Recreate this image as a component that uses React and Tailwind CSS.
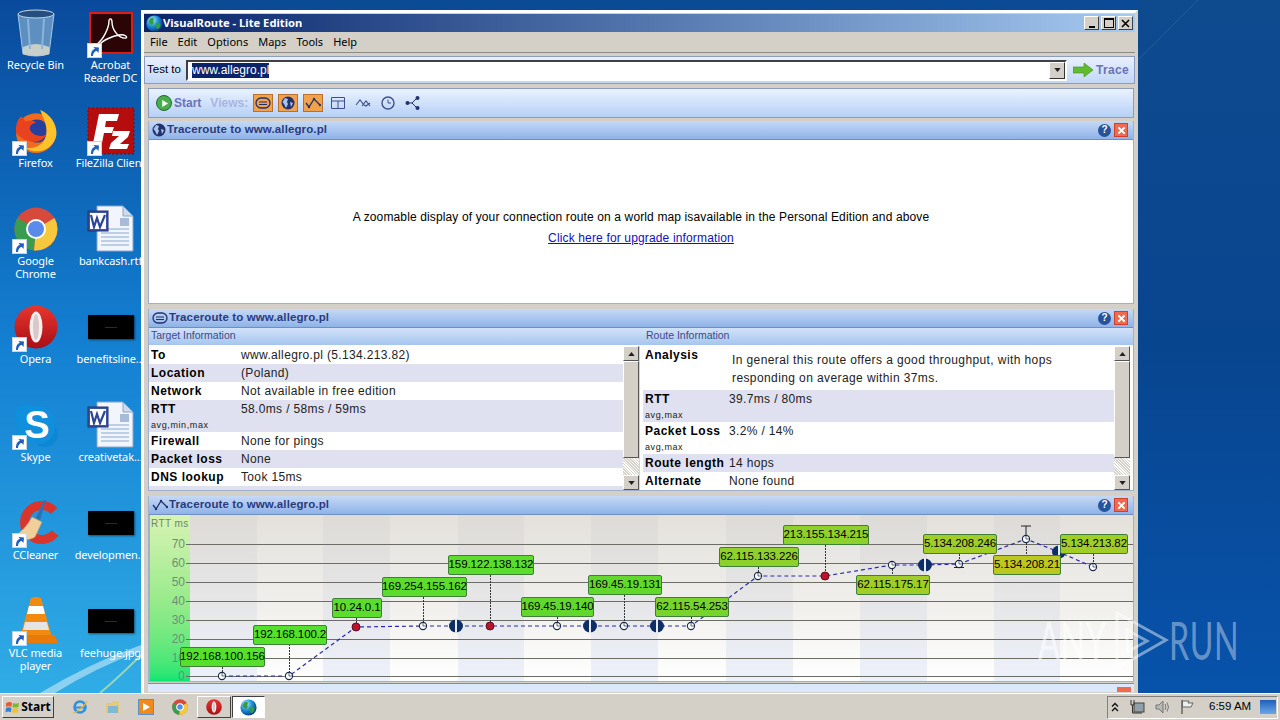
import { useId } from "react";

const sans = "font-['Liberation_Sans',Arial,sans-serif]";
const ui = "font-['Noto_Sans','Liberation_Sans',sans-serif]";

const Arrow = () => (
  <span className="absolute left-[0px] bottom-[0px] flex h-[15px] w-[15px] items-center justify-center border border-[#c8d4e4] bg-white">
    <svg viewBox="0 0 12 12" className="h-[12px] w-[12px]">
      <path d="M3 11 C3 6 5 4 7 4 L5.5 2 L11 2.5 L10.5 8 L8.8 6 C7 6 5 8 5 11 Z" fill="#1f5fc0" />
    </svg>
  </span>
);

const Globe = ({ size = 18 }) => {
  const id = useId();
  return (
    <svg viewBox="0 0 20 20" width={size} height={size} className="shrink-0">
      <defs>
        <radialGradient id={id} cx="35%" cy="30%" r="75%">
          <stop offset="0" stopColor="#bfeaff" />
          <stop offset="0.5" stopColor="#1d8fd8" />
          <stop offset="1" stopColor="#053a80" />
        </radialGradient>
      </defs>
      <circle cx="10" cy="10" r="9.5" fill={`url(#${id})`} />
      <path d="M5 4 C8 2 10 4 9 6 C8 8 10 9 8 11 C6 13 4 10 3 8 Z M12 9 C15 8 18 10 17 13 C16 16 13 18 12 15 Z" fill="#2fa03a" />
    </svg>
  );
};

const RecycleIcon = () => (
  <svg viewBox="0 0 40 48" className="h-[48px] w-[40px]">
    <path d="M2 5 L38 5 L33 45 Q20 49 7 45 Z" fill="#5d8fc0" stroke="#a8c8e0" />
    <ellipse cx="20" cy="5" rx="18" ry="4" fill="#264f80" stroke="#c4d8e8" />
    <path d="M7 38 Q20 32 33 38 L33 45 Q20 49 7 45 Z" fill="#c8cfc8" />
    <path d="M12 10 L14 40 M28 10 L26 40" stroke="#8ab4d8" strokeWidth="2" />
  </svg>
);

const AcrobatIcon = () => (
  <svg viewBox="0 0 44 42" className="h-[42px] w-[44px]">
    <rect x="1" y="1" width="42" height="40" fill="#2b0505" stroke="#e01b14" strokeWidth="2" />
    <path d="M8 32 C14 28 20 16 20 9 C20 6 23 6 23 10 C23 18 30 27 37 26 C39 25 36 22 30 23 C24 24 14 28 10 33" fill="none" stroke="#fff" strokeWidth="1.4" />
  </svg>
);

const FirefoxIcon = () => (
  <svg viewBox="0 0 44 44" className="h-[46px] w-[46px]">
    <circle cx="22" cy="24" r="19" fill="#f26a1f" />
    <circle cx="23" cy="22" r="11" fill="#27409c" />
    <path d="M26 2 C40 8 46 24 38 34 C32 42 20 44 12 38 C22 40 32 34 32 22 C32 14 28 8 26 2 Z" fill="#ffc22a" />
    <path d="M3 24 C2 16 5 10 8 8 L12 13 C16 11 20 12 22 14 C16 15 15 19 17 22 C20 27 28 28 32 25 C28 34 14 36 3 24 Z" fill="#e8421f" />
  </svg>
);

const FileZillaIcon = () => (
  <svg viewBox="0 0 48 48" className="h-[48px] w-[48px]">
    <rect x="1" y="1" width="46" height="46" fill="#b50d0d" strokeDasharray="2 2" stroke="#7a0a0a" />
    <path d="M12 7 L32 7 L30 14 L19 14 L18 20 L27 20 L25 26 L17 26 L14 41 L5 41 Z" fill="#fff" />
    <path d="M26 24 L43 24 L41 30 L33 37 L42 37 L40 42 L22 42 L24 36 L32 29 L25 29 Z" fill="#fff" />
  </svg>
);

const ChromeIcon = () => (
  <svg viewBox="0 0 44 44" className="h-[44px] w-[44px]">
    <circle cx="22" cy="22" r="21.5" fill="#d64a3c" />
    <path d="M22 22 L3.5 11 A21.5 21.5 0 0 0 20 43.4 Z" fill="#3a9c4e" />
    <path d="M22 22 L40.5 11 A21.5 21.5 0 0 1 20 43.4 Z" fill="#f7c83c" />
    <circle cx="22" cy="22" r="10" fill="#fff" />
    <circle cx="22" cy="22" r="8" fill="#5a8bea" />
  </svg>
);

const WordIcon = () => (
  <svg viewBox="0 0 48 48" className="h-[48px] w-[48px]">
    <path d="M10 1 L36 1 L46 11 L46 46 L10 46 Z" fill="#f2f5fb" stroke="#8aa4cc" />
    <path d="M36 1 L36 11 L46 11 Z" fill="#cfdcee" stroke="#8aa4cc" />
    <path d="M14 24 L42 24 M14 28 L42 28 M14 32 L42 32 M14 36 L42 36 M14 40 L42 40" stroke="#8aa8d4" />
    <rect x="33" y="13" width="9" height="8" fill="#a8bcd8" />
    <rect x="1" y="6" width="20" height="20" fill="#3a55a8" stroke="#22336f" />
    <rect x="3" y="8" width="16" height="16" fill="#fff" />
    <path d="M4 10 L7 22 L10 13 L13 22 L18 10" fill="none" stroke="#2c4596" strokeWidth="2.2" />
  </svg>
);

const OperaIcon = ({ size = 44 }) => {
  const id = useId();
  return (
    <svg viewBox="0 0 44 44" width={size} height={size}>
      <defs>
        <linearGradient id={id} x1="0" y1="0" x2="0" y2="1">
          <stop offset="0" stopColor="#e8352f" />
          <stop offset="1" stopColor="#a80f14" />
        </linearGradient>
      </defs>
      <circle cx="22" cy="22" r="21.5" fill={`url(#${id})`} />
      <ellipse cx="22" cy="22" rx="6.5" ry="15.5" fill="#f4eeee" />
      <ellipse cx="22" cy="22" rx="3" ry="13" fill="#d8c8c8" />
    </svg>
  );
};

const SkypeIcon = () => (
  <svg viewBox="0 0 44 44" className="h-[44px] w-[44px]">
    <circle cx="13" cy="13" r="12" fill="#0f8fdc" />
    <circle cx="31" cy="31" r="13" fill="#0f86d4" />
    <rect x="3" y="3" width="38" height="38" rx="17" fill="#0f8fdc" />
    <text x="23" y="35" textAnchor="middle" fontSize="38" fontWeight="700" fill="#fff" fontFamily="Liberation Sans">S</text>
  </svg>
);

const CCleanerIcon = () => (
  <svg viewBox="0 0 46 46" className="h-[46px] w-[46px]">
    <path d="M41 11 A17 17 0 1 0 42 33" fill="none" stroke="#d9352a" strokeWidth="9" />
    <path d="M33 0 L27 20 L23 18 L31 0 Z" fill="#2f6fb4" />
    <path d="M19 17 L29 22 L22 37 C16 41 7 40 2 36 C8 32 14 26 19 17 Z" fill="#f0cf9a" stroke="#c89a60" strokeWidth="0.6" />
  </svg>
);

const VlcIcon = () => (
  <svg viewBox="0 0 44 48" className="h-[48px] w-[44px]">
    <path d="M17 1 Q22 -1 27 1 L38 40 L6 40 Z" fill="#f08a10" />
    <path d="M15 9 L29 9 L31 17 L13 17 Z" fill="#fff" />
    <path d="M11 25 L33 25 L35 33 L9 33 Z" fill="#e4e4e4" />
    <path d="M3 38 L41 38 L44 46 L0 46 Z" fill="#e87a08" />
  </svg>
);

const BlackThumb = () => (
  <span className="flex h-[24px] w-[46px] items-center justify-center bg-black shadow-[1px_1px_2px_rgba(0,0,0,0.5)]">
    <span className="h-px w-[12px] bg-[#3a2a10]" />
  </span>
);

const desktopItems = [
  { name: "Recycle Bin", icon: <RecycleIcon /> },
  { name: "Acrobat Reader DC", icon: <AcrobatIcon />, link: true },
  { name: "Firefox", icon: <FirefoxIcon />, link: true },
  { name: "FileZilla Client", icon: <FileZillaIcon />, link: true, clip: true },
  { name: "Google Chrome", icon: <ChromeIcon />, link: true },
  { name: "bankcash.rtf", icon: <WordIcon /> },
  { name: "Opera", icon: <OperaIcon />, link: true },
  { name: "benefitsline...", icon: <BlackThumb /> },
  { name: "Skype", icon: <SkypeIcon />, link: true },
  { name: "creativetak...", icon: <WordIcon /> },
  { name: "CCleaner", icon: <CCleanerIcon />, link: true },
  { name: "developmen...", icon: <BlackThumb /> },
  { name: "VLC media player", icon: <VlcIcon />, link: true },
  { name: "feehuge.jpg", icon: <BlackThumb /> },
];

const DesktopIcon = ({ item }) => (
  <div className="flex h-[98px] w-[71px] flex-col items-center">
    <div className="relative flex h-[50px] w-[48px] items-center justify-center">
      {item.icon}
      {item.link && <Arrow />}
    </div>
    <div className={`${ui} w-[72px] text-center text-[11px] leading-[13px] tracking-[-0.1px] text-white ${item.clip ? "whitespace-nowrap" : ""}`}>
      {item.name}
    </div>
  </div>
);

const HelpClose = () => (
  <div className="flex items-center gap-[3px]">
    <span className={`${sans} flex h-[13px] w-[13px] items-center justify-center rounded-full bg-[#27529c] text-[10px] font-bold leading-none text-white`}>?</span>
    <span className="flex h-[14px] w-[14px] items-center justify-center border border-[#d0402a] bg-[#ee6a50]">
      <svg viewBox="0 0 10 10" className="h-[9px] w-[9px]"><path d="M1.5 1.5 L8.5 8.5 M8.5 1.5 L1.5 8.5" stroke="#fff" strokeWidth="2.2" /></svg>
    </span>
  </div>
);

const PanelHeader = ({ icon }) => (
  <div className="flex h-[19px] items-center justify-between rounded-t-[4px] border-b border-[#6f8fbe] bg-gradient-to-b from-[#c6d9f5] to-[#8eb3e8] pl-[3px] pr-[5px]">
    <div className="flex items-center gap-[1px]">
      {icon}
      <span className={`${sans} text-[11.5px] font-bold tracking-[0.12px] text-[#2b3a80]`}>Traceroute to www.allegro.pl</span>
    </div>
    <HelpClose />
  </div>
);

const OvalIcon = () => (
  <svg viewBox="0 0 16 12" className="h-[12px] w-[16px]">
    <rect x="1" y="1" width="14" height="10" rx="5" fill="none" stroke="#24306e" strokeWidth="1.3" />
    <path d="M4 5 L12 5 M4 7.5 L12 7.5" stroke="#24306e" />
  </svg>
);

const GlobeOutline = ({ color = "#24306e" }) => (
  <svg viewBox="0 0 14 14" className="h-[14px] w-[14px]">
    <circle cx="7" cy="7" r="6.5" fill={color} />
    <path d="M4 2 L7 3 L6 6 L7 8 L5 12 L3 8 L1.5 6 Z M9 6 L12 7 L10 11 Z" fill="#a9c4ec" />
  </svg>
);

const WaveIcon = ({ color = "#24306e" }) => (
  <svg viewBox="0 0 16 12" className="h-[12px] w-[16px]">
    <path d="M1 6 L4 10 L9 2 L15 8" fill="none" stroke={color} strokeWidth="1.3" />
    <circle cx="4" cy="10" r="1.2" fill={color} /><circle cx="9" cy="2" r="1.2" fill={color} /><circle cx="15" cy="8" r="1.2" fill={color} />
  </svg>
);

const ScrollBtn = ({ up }) => (
  <div className="flex h-[15px] items-center justify-center border border-t-white border-l-white border-r-[#555] border-b-[#555] bg-[#d4d0c8]">
    <svg viewBox="0 0 8 5" className="h-[4px] w-[7px]"><path d={up ? "M4 0 L8 5 L0 5 Z" : "M0 0 L8 0 L4 5 Z"} fill="#222" /></svg>
  </div>
);

const Scrollbar = () => (
  <div className="flex w-[16px] shrink-0 flex-col">
    <ScrollBtn up />
    <div className="h-[97px] border border-t-white border-l-white border-r-[#555] border-b-[#555] bg-[#d4d0c8]" />
    <div className="flex-1 bg-[repeating-linear-gradient(45deg,#d4d0c8_0,#d4d0c8_1px,#fff_1px,#fff_2px)]" />
    <ScrollBtn />
  </div>
);

const InfoRow = ({ label, sub, value, alt, h, col, children }) => (
  <div className={`flex shrink-0 ${alt ? "bg-[#dfe0f0]" : "bg-white"} pl-[2px]`} style={{ height: h }}>
    <div className={col}>
      <div className={`${sans} text-[12px] font-bold leading-[18px] tracking-[0.5px] text-black`}>{label}</div>
      {sub && <div className={`${sans} mt-[1px] text-[9px] leading-[12px] tracking-[0.6px] text-[#222]`}>{sub}</div>}
    </div>
    {children || <div className={`${sans} text-[12px] leading-[18px] tracking-[0.35px] text-[#222]`}>{value}</div>}
  </div>
);

const cols = [
  [190, 67, true], [257, 66, false], [323, 67, true], [390, 68, false], [458, 66, true], [524, 67, false],
  [591, 67, true], [658, 68, false], [726, 67, true], [793, 67, false], [860, 67, true], [927, 67, false],
  [994, 66, true], [1060, 73, false],
];
const gridY = [[70, 544], [60, 563], [50, 582], [40, 601], [30, 620], [20, 639], [10, 658], [0, 676]];
const ox = 150;
const oy = 515;

const nodes = [
  [222, 676], [289, 676], [356, 627, "red"], [423, 626], [456, 626, "block"], [490, 626, "red"], [557, 626],
  [590, 626, "block"], [624, 626], [657, 626, "block"], [691, 626], [758, 576], [825, 576, "red"], [892, 565],
  [925, 565, "block"], [959, 564], [1026, 539], [1059, 552, "block"], [1093, 567],
];

const labels = [
  { t: "192.168.100.156", x: 180, y: 647, w: 85, c: "bg-[#55e02c]", to: [222, 667, 672] },
  { t: "192.168.100.2", x: 253, y: 625, w: 74, c: "bg-[#55e02c]", to: [289, 644, 672] },
  { t: "10.24.0.1", x: 332, y: 598, w: 50, c: "bg-[#5cdc2c]", to: [356, 618, 623] },
  { t: "169.254.155.162", x: 382, y: 577, w: 85, c: "bg-[#5cdc2c]", to: [423, 597, 622] },
  { t: "159.122.138.132", x: 448, y: 555, w: 86, c: "bg-[#5cdc2c]", to: [490, 575, 622] },
  { t: "169.45.19.140", x: 521, y: 597, w: 73, c: "bg-[#62d82c]", to: [557, 617, 622] },
  { t: "169.45.19.131", x: 588, y: 575, w: 74, c: "bg-[#62d82c]", to: [624, 595, 622] },
  { t: "62.115.54.253", x: 655, y: 597, w: 74, c: "bg-[#78d42c]", to: [691, 617, 622] },
  { t: "62.115.133.226", x: 719, y: 547, w: 80, c: "bg-[#8ed12c]", to: [758, 567, 572] },
  { t: "213.155.134.215", x: 783, y: 525, w: 86, c: "bg-[#8ed12c]", to: [825, 545, 572] },
  { t: "62.115.175.17", x: 856, y: 575, w: 74, c: "bg-[#a0ce26]", to: [892, 569, 575] },
  { t: "5.134.208.246", x: 923, y: 534, w: 74, c: "bg-[#a0ce26]", to: [959, 554, 560] },
  { t: "5.134.208.21", x: 993, y: 555, w: 68, c: "bg-[#bcc81f]", to: [1026, 543, 555] },
  { t: "5.134.213.82", x: 1060, y: 534, w: 68, c: "bg-[#a0ce26]", to: [1093, 554, 563] },
];

const Chart = () => (
  <div className="relative h-[166px] overflow-hidden border-l border-[#9db1cf] bg-white">
    <div className="flex h-full">
      <div className="h-full w-[40px] shrink-0 bg-gradient-to-b from-[#d8f3b4] via-[#9aeb8c] to-[#0ae672]" />
      {cols.map(([x, w, isBlue]) => (
        <div
          key={x}
          className={`h-full shrink-0 bg-gradient-to-b ${isBlue ? "from-[#dddbd6] via-[#e6e6e8] to-[#edf1fb]" : "from-[#e4e1dc] via-[#efeeea] to-white"}`}
          style={{ width: w }}
        />
      ))}
    </div>

    <span className={`${sans} absolute left-[1px] top-[1px] text-[10px] tracking-[0.4px] text-[#6a8a60]`}>RTT ms</span>
    {gridY.map(([v, y]) => (
      <span key={v} className={`${sans} absolute right-[948px] text-[12px] leading-[12px] text-[#6f9078]`} style={{ top: y - oy - 6 }}>{v}</span>
    ))}

    <svg className="absolute left-0 top-0" width="986" height="166" viewBox="0 0 986 166">
      {gridY.map(([v, y]) => (
        <line key={v} x1={186 - ox} x2="986" y1={y - oy + 0.5} y2={y - oy + 0.5} stroke="#6d6d68" />
      ))}
      <polyline
        points={nodes.map(([x, y]) => `${x - ox},${y - oy}`).join(" ")}
        fill="none"
        stroke="#2a2ab0"
        strokeWidth="1.2"
        strokeDasharray="4 3"
      />
      {labels.map((l) => (
        <line key={l.t} x1={l.to[0] - ox + 0.5} x2={l.to[0] - ox + 0.5} y1={l.to[1] - oy} y2={l.to[2] - oy} stroke="#333" strokeDasharray="2 1" />
      ))}
      <path d={`M${1021 - ox} ${526 - oy} H${1031 - ox} M${1026 - ox} ${526 - oy} V${535 - oy}`} stroke="#222" />
      <path d={`M${954 - ox} ${567.5 - oy} H${964 - ox}`} stroke="#222" />
      {nodes.map(([x, y, kind]) => {
        const cx = x - ox;
        const cy = y - oy;
        if (kind === "block") {
          return (
            <g key={x}>
              <ellipse cx={cx} cy={cy} rx="7" ry="6.5" fill="#0d2f66" />
              <rect x={cx - 1} y={cy - 7} width="2" height="14" fill="#e8ecf4" />
            </g>
          );
        }
        if (kind === "red") return <circle key={x} cx={cx} cy={cy} r="4" fill="#c0102c" stroke="#5a1020" />;
        return (
          <g key={x}>
            <circle cx={cx} cy={cy} r="3.6" fill="#fff" stroke="#1a2a4a" strokeWidth="1.1" />
            <path d={`M${cx} ${cy} V${cy - 3} M${cx} ${cy} H${cx + 3}`} stroke="#1a2a4a" strokeWidth="0.7" />
          </g>
        );
      })}
    </svg>

    {labels.map((l) => (
      <div
        key={l.t}
        className={`${sans} ${l.c} absolute flex h-[20px] items-center justify-center rounded-[2px] border border-[#3f7f3a] text-[11.5px] leading-none tracking-[-0.1px] text-black`}
        style={{ left: l.x - ox, top: l.y - oy, width: l.w }}
      >
        {l.t}
      </div>
    ))}
  </div>
);

const ToolIcon = ({ children, on }) => (
  <span className={`flex h-[18px] w-[20px] items-center justify-center ${on ? "border border-[#b8702c] bg-[#f2a24a]" : ""}`}>{children}</span>
);

const Toolbar = () => (
  <div className="mt-[4px] flex h-[30px] items-center border border-[#8b9cbc] bg-gradient-to-b from-[#eaf2fe] to-[#b6d0f6] pl-[7px]">
    <span className="flex h-[16px] w-[16px] items-center justify-center rounded-full border border-[#1f6a2c] bg-[#49ad4f]">
      <svg viewBox="0 0 10 10" className="h-[9px] w-[9px]"><path d="M2.5 1 L9 5 L2.5 9 Z" fill="#fff" /></svg>
    </span>
    <span className={`${sans} ml-[2px] text-[12px] font-bold text-[#6a72b8]`}>Start</span>
    <span className={`${sans} ml-[9px] text-[12px] font-bold text-[#a9b4e4]`}>Views:</span>
    <div className="ml-[5px] flex gap-[5px]">
      <ToolIcon on><OvalIcon /></ToolIcon>
      <ToolIcon on><GlobeOutline /></ToolIcon>
      <ToolIcon on><WaveIcon /></ToolIcon>
      <ToolIcon>
        <svg viewBox="0 0 14 12" className="h-[12px] w-[14px]"><path d="M0.5 0.5 H13.5 V11.5 H0.5 Z M0.5 4 H13.5 M7 4 V11.5" fill="none" stroke="#3f4f90" /></svg>
      </ToolIcon>
      <ToolIcon>
        <svg viewBox="0 0 16 12" className="h-[12px] w-[16px]"><path d="M1 8 L5 3 L9 8 L11 9 L15 6 M7 9 L11 4 L15 9" fill="none" stroke="#3f4f90" strokeWidth="1.1" /></svg>
      </ToolIcon>
      <ToolIcon>
        <svg viewBox="0 0 14 14" className="h-[14px] w-[14px]"><circle cx="7" cy="7" r="6" fill="none" stroke="#3f4f90" strokeWidth="1.4" /><path d="M7 3.5 V7 H10" fill="none" stroke="#3f4f90" /></svg>
      </ToolIcon>
      <ToolIcon>
        <svg viewBox="0 0 16 14" className="h-[14px] w-[16px]"><path d="M2 7 H7 L12 2 M7 7 L12 12" fill="none" stroke="#24306e" /><circle cx="2.5" cy="7" r="2" fill="#24306e" /><circle cx="12.5" cy="2" r="2" fill="#24306e" /><circle cx="12.5" cy="12" r="2" fill="#24306e" /></svg>
      </ToolIcon>
    </div>
  </div>
);

const TestBar = () => (
  <div className="flex h-[28px] items-center border border-[#8b9cbc] bg-gradient-to-b from-[#e9f0fc] to-[#c2d7f6] pl-[2px]">
    <span className={`${sans} w-[39px] text-[11.5px] text-black`}>Test to</span>
    <div className="flex h-[21px] w-[881px] items-center border-2 border-b-white border-r-white border-t-[#404040] border-l-[#404040] bg-white pl-[4px]">
      <span className={`${sans} bg-[#0a246a] text-[12px] leading-[15px] text-white`}>www.allegro.pl</span>
      <span className="ml-auto flex h-[17px] w-[16px] items-center justify-center border border-t-white border-l-white border-r-[#333] border-b-[#333] bg-[#d4d0c8]">
        <svg viewBox="0 0 8 5" className="h-[4px] w-[7px]"><path d="M0 0 L8 0 L4 5 Z" fill="#222" /></svg>
      </span>
    </div>
    <svg viewBox="0 0 20 14" className="ml-[6px] h-[14px] w-[20px]">
      <path d="M0 4 H11 V0 L20 7 L11 14 V10 H0 Z" fill="#62bb2f" stroke="#3a8a20" strokeWidth="0.6" />
    </svg>
    <span className={`${sans} ml-[3px] text-[12px] font-bold tracking-[0.3px] text-[#6a72b8]`}>Trace</span>
  </div>
);

const TitleBar = () => (
  <div className="mt-[1px] flex h-[18px] items-center bg-gradient-to-r from-[#0a246a] to-[#a6caf0] pl-[2px] pr-[2px]">
    <Globe size={17} />
    <span className={`${ui} text-[11.2px] font-bold text-white`}>VisualRoute - Lite Edition</span>
    <div className="ml-auto flex items-center gap-[2px]">
      {["min", "max", "close"].map((k) => (
        <span key={k} className="flex h-[14px] w-[15px] items-center justify-center border border-t-white border-l-white border-r-[#404040] border-b-[#404040] bg-[#d4d0c8]">
          {k === "min" && <span className="mt-[7px] h-[2px] w-[6px] bg-black" />}
          {k === "max" && <span className="h-[10px] w-[10px] border border-t-2 border-black" />}
          {k === "close" && (
            <svg viewBox="0 0 9 9" className="h-[9px] w-[9px]"><path d="M1 1 L8 8 M8 1 L1 8" stroke="#000" strokeWidth="1.6" /></svg>
          )}
        </span>
      ))}
    </div>
  </div>
);

const TargetInfo = () => {
  const col = "w-[90px] shrink-0";
  return (
    <div className="flex h-[144px] w-[491px] shrink-0 border-r border-[#cfd6e4]">
      <div className="flex min-w-0 flex-1 flex-col bg-[#dfe0f0]">
        <InfoRow col={col} h={18} label="To" value="www.allegro.pl (5.134.213.82)" />
        <InfoRow col={col} h={18} alt label="Location" value="(Poland)" />
        <InfoRow col={col} h={18} label="Network" value="Not available in free edition" />
        <InfoRow col={col} h={32} alt label="RTT" sub="avg,min,max" value="58.0ms / 58ms / 59ms" />
        <InfoRow col={col} h={18} label="Firewall" value="None for pings" />
        <InfoRow col={col} h={18} alt label="Packet loss" value="None" />
        <InfoRow col={col} h={18} label="DNS lookup" value="Took 15ms" />
      </div>
      <Scrollbar />
    </div>
  );
};

const RouteInfo = () => {
  const col = "w-[84px] shrink-0";
  return (
    <div className="flex h-[144px] min-w-0 flex-1 pl-[3px] pr-[3px]">
      <div className="flex min-w-0 flex-1 flex-col bg-white">
        <InfoRow col={col} h={44} label="Analysis">
          <div className={`${sans} pl-[3px] pt-[5px] text-[12px] leading-[18px] tracking-[0.4px] text-[#222]`}>
            In general this route offers a good throughput, with hops<br />responding on average within 37ms.
          </div>
        </InfoRow>
        <InfoRow col={col} h={32} alt label="RTT" sub="avg,max" value="39.7ms / 80ms" />
        <InfoRow col={col} h={32} label="Packet Loss" sub="avg,max" value="3.2% / 14%" />
        <InfoRow col={col} h={18} alt label="Route length" value="14 hops" />
        <InfoRow col={col} h={18} label="Alternate" value="None found" />
      </div>
      <Scrollbar />
    </div>
  );
};

const SubHead = ({ children, className }) => (
  <div className={`${sans} flex h-[18px] items-center border-b border-white bg-gradient-to-b from-[#d2e2f8] to-[#a6c5ef] pb-[2px] pl-[2px] text-[10.5px] text-[#3a4a8c] ${className}`}>
    {children}
  </div>
);

const Window = () => (
  <div className="h-[683px] w-[997px] shrink-0 overflow-hidden border-[3px] border-b-0 border-[#d4d0c8] border-t-white border-l-white bg-[#d4d0c8]">
    <TitleBar />
    <div className={`${ui} flex h-[20px] items-center gap-[10px] pl-[6px] text-[11px] text-black`}>
      {["File", "Edit", "Options", "Maps", "Tools", "Help"].map((m) => <span key={m}>{m}</span>)}
    </div>
    <div className="h-[4px] border-t border-[#8d8d88]" />
    <TestBar />
    <div className="ml-[4px] mr-[1px]">
      <Toolbar />
      <div className="mt-[3px] border border-t-0 border-[#9db1cf]">
        <PanelHeader icon={<GlobeOutline />} />
        <div className={`${sans} flex h-[163px] flex-col items-center bg-white pt-[70px] text-[12px] text-black`}>
          <div className="leading-[15px] tracking-[0.13px]">A zoomable display of your connection route on a world map isavailable in the Personal Edition and above</div>
          <div className="mt-[6px] leading-[15px] tracking-[0.15px] text-[#1010c0] underline">Click here for upgrade information</div>
        </div>
      </div>
      <div className="mt-[5px] border border-t-0 border-[#9db1cf]">
        <PanelHeader icon={<OvalIcon />} />
        <div className="flex">
          <SubHead className="w-[495px]">Target Information</SubHead>
          <SubHead className="flex-1">Route Information</SubHead>
        </div>
        <div className="flex bg-white">
          <TargetInfo />
          <RouteInfo />
        </div>
      </div>
      <div className="mt-[5px] border border-t-0 border-[#9db1cf]">
        <PanelHeader icon={<WaveIcon />} />
        <Chart />
      </div>
      <div className="relative mt-[1px] h-[9px] overflow-hidden border-t border-[#6f8fbe] bg-[#dbe8fb]">
        <span className={`${sans} absolute left-[58px] top-[4px] whitespace-nowrap text-[12px] font-bold tracking-[1.5px] text-black`}>Full information for each of the routers is available</span>
        <span className="absolute right-[3px] top-[3px] h-[10px] w-[14px] bg-[#ee6a50]" />
      </div>
    </div>
  </div>
);

const Taskbar = () => (
  <div className="flex h-[27px] shrink-0 items-center border-t border-white bg-[#d4d0c8] pl-[2px]">
    <div className={`${ui} flex h-[22px] w-[52px] items-center justify-center gap-[1px] border border-t-white border-l-white border-r-[#404040] border-b-[#404040] text-[12px] font-bold text-black`}>
      <svg viewBox="0 0 14 14" className="h-[15px] w-[15px]">
        <path d="M1 3 Q4 1 6.5 2.5 L6 6.5 Q3.5 5 1 6.5 Z" fill="#e85a2a" />
        <path d="M7.5 2.8 Q10 4 13 2.5 L12.5 6.5 Q10 7.5 7 6.8 Z" fill="#7cb82f" />
        <path d="M1 7.5 Q3.5 6 6 7.5 L5.5 11.5 Q3 10 0.5 11.5 Z" fill="#2f7fd8" />
        <path d="M7 7.8 Q10 8.5 12.5 7.5 L12 11.5 Q9.5 12.5 6.5 11.5 Z" fill="#f2c028" />
      </svg>
      Start
    </div>
    <div className="ml-[18px] flex items-center gap-[17px]">
      <svg viewBox="0 0 16 16" className="h-[16px] w-[16px]">
        <circle cx="8" cy="8" r="5.5" fill="none" stroke="#2f8fe0" strokeWidth="2.6" />
        <path d="M3 8.5 H13" stroke="#2f8fe0" strokeWidth="2" />
        <path d="M1 14 C4 14 13 7 15 2" fill="none" stroke="#e8b830" strokeWidth="1.2" />
      </svg>
      <svg viewBox="0 0 16 16" className="h-[16px] w-[16px]">
        <path d="M1 4 H7 L8 2 H14 V14 H1 Z" fill="#e6c878" />
        <rect x="3" y="7" width="10" height="7" fill="#7fb8d8" />
      </svg>
      <span className="flex h-[16px] w-[16px] items-center justify-center border border-[#5a90c8] bg-[#f08a20]">
        <svg viewBox="0 0 8 8" className="h-[8px] w-[8px]"><path d="M1 0 L8 4 L1 8 Z" fill="#fff" /></svg>
      </span>
      <svg viewBox="0 0 44 44" className="ml-[1px] h-[16px] w-[16px]">
        <circle cx="22" cy="22" r="21.5" fill="#d64a3c" />
        <path d="M22 22 L3.5 11 A21.5 21.5 0 0 0 20 43.4 Z" fill="#3a9c4e" />
        <path d="M22 22 L40.5 11 A21.5 21.5 0 0 1 20 43.4 Z" fill="#f7c83c" />
        <circle cx="22" cy="22" r="9" fill="#5a8bea" stroke="#fff" strokeWidth="3" />
      </svg>
    </div>
    <div className="ml-[9px] flex h-[22px] w-[34px] items-center justify-center border border-t-white border-l-white border-r-[#404040] border-b-[#404040]">
      <OperaIcon size={16} />
    </div>
    <div className="ml-[1px] flex h-[22px] w-[33px] items-center justify-center border border-t-[#404040] border-l-[#404040] border-r-white border-b-white bg-white">
      <Globe size={17} />
    </div>
    <div className="ml-auto mr-[2px] flex h-[23px] w-[171px] items-center border border-t-[#808080] border-l-[#808080] border-r-white border-b-white pl-[3px]">
      <svg viewBox="0 0 8 10" className="h-[10px] w-[8px]"><path d="M1 4.5 L4 1.5 L7 4.5 M1 9 L4 6 L7 9" fill="none" stroke="#111" strokeWidth="1.4" /></svg>
      <svg viewBox="0 0 16 16" className="ml-[10px] h-[16px] w-[16px]">
        <rect x="5" y="4" width="10" height="9" fill="#8fa0a8" stroke="#444" />
        <path d="M2 1 V6 H5 V1 M3.5 6 V14 H13" fill="none" stroke="#333" />
      </svg>
      <svg viewBox="0 0 16 16" className="ml-[9px] h-[16px] w-[16px]">
        <path d="M2 6 H5 L9 2 V14 L5 10 H2 Z" fill="#b8b8b4" stroke="#777" />
        <path d="M11 5 Q13 8 11 11 M13 3.5 Q16 8 13 12.5" fill="none" stroke="#777" />
      </svg>
      <svg viewBox="0 0 16 16" className="ml-[9px] h-[16px] w-[16px]">
        <path d="M3 1 V15" stroke="#555" strokeWidth="1.3" /><path d="M3.5 2 H10 L9 4 H14 L12 8 H3.5 Z" fill="#eee" stroke="#666" />
      </svg>
      <span className={`${sans} ml-[14px] whitespace-nowrap text-[11.5px] text-black`}>6:59 AM</span>
      <span className="ml-auto mr-[1px] h-[14px] w-[16px] bg-gradient-to-b from-[#1f5fb8] to-[#6aa8e8]" />
    </div>
  </div>
);

const Watermark = () => (
  <div className="pointer-events-none absolute left-[1038px] top-[610px] flex h-[60px] items-center">
    <span className="w-[75px] origin-left scale-x-[0.62] whitespace-nowrap font-['Lato',sans-serif] text-[52px] leading-none tracking-[1px] text-white/55">ANY</span>
    <svg viewBox="0 0 56 60" className="h-[60px] w-[56px] shrink-0">
      <path d="M4 3 L53 30 L4 58 Z M14 20 V42 L34 31 Z" fill="none" stroke="#fff" strokeOpacity="0.45" strokeWidth="3" />
    </svg>
    <span className="w-[70px] origin-left scale-x-[0.62] whitespace-nowrap font-['Lato',sans-serif] text-[52px] leading-none tracking-[1px] text-white/40">RUN</span>
  </div>
);

export default function App() {
  return (
    <div className="relative flex h-[720px] w-[1280px] flex-col overflow-hidden bg-[#0b4a94]">
      <div className="flex min-h-0 flex-1">
        <div className="relative w-[141px] shrink-0 overflow-hidden bg-gradient-to-b from-[#0a4a9c] via-[#1480d2] to-[#30ace6] pt-[8px]">
          <svg className="absolute bottom-0 left-0" width="141" height="110" viewBox="0 0 141 110">
            <path d="M40 110 Q90 80 141 62 L141 68 Q95 85 55 110 Z" fill="#fff" fillOpacity="0.45" />
            <path d="M100 110 Q118 95 141 72" fill="none" stroke="#d8f0a0" strokeOpacity="0.6" strokeWidth="2" />
          </svg>
          <div className="relative grid grid-cols-[75px_66px] justify-start">
            {desktopItems.map((item) => <DesktopIcon key={item.name} item={item} />)}
          </div>
        </div>
        <div className="pt-[10px]">
          <Window />
        </div>
        <div className="relative flex-1 overflow-hidden bg-gradient-to-b from-[#0e4a8e] via-[#08458f] to-[#0753ab]">
          <svg className="absolute left-0 top-0" width="142" height="60" viewBox="0 0 142 60">
            <path d="M0 60 L60 0" stroke="#fff" strokeOpacity="0.1" />
          </svg>
        </div>
      </div>
      <Taskbar />
      <Watermark />
    </div>
  );
}
